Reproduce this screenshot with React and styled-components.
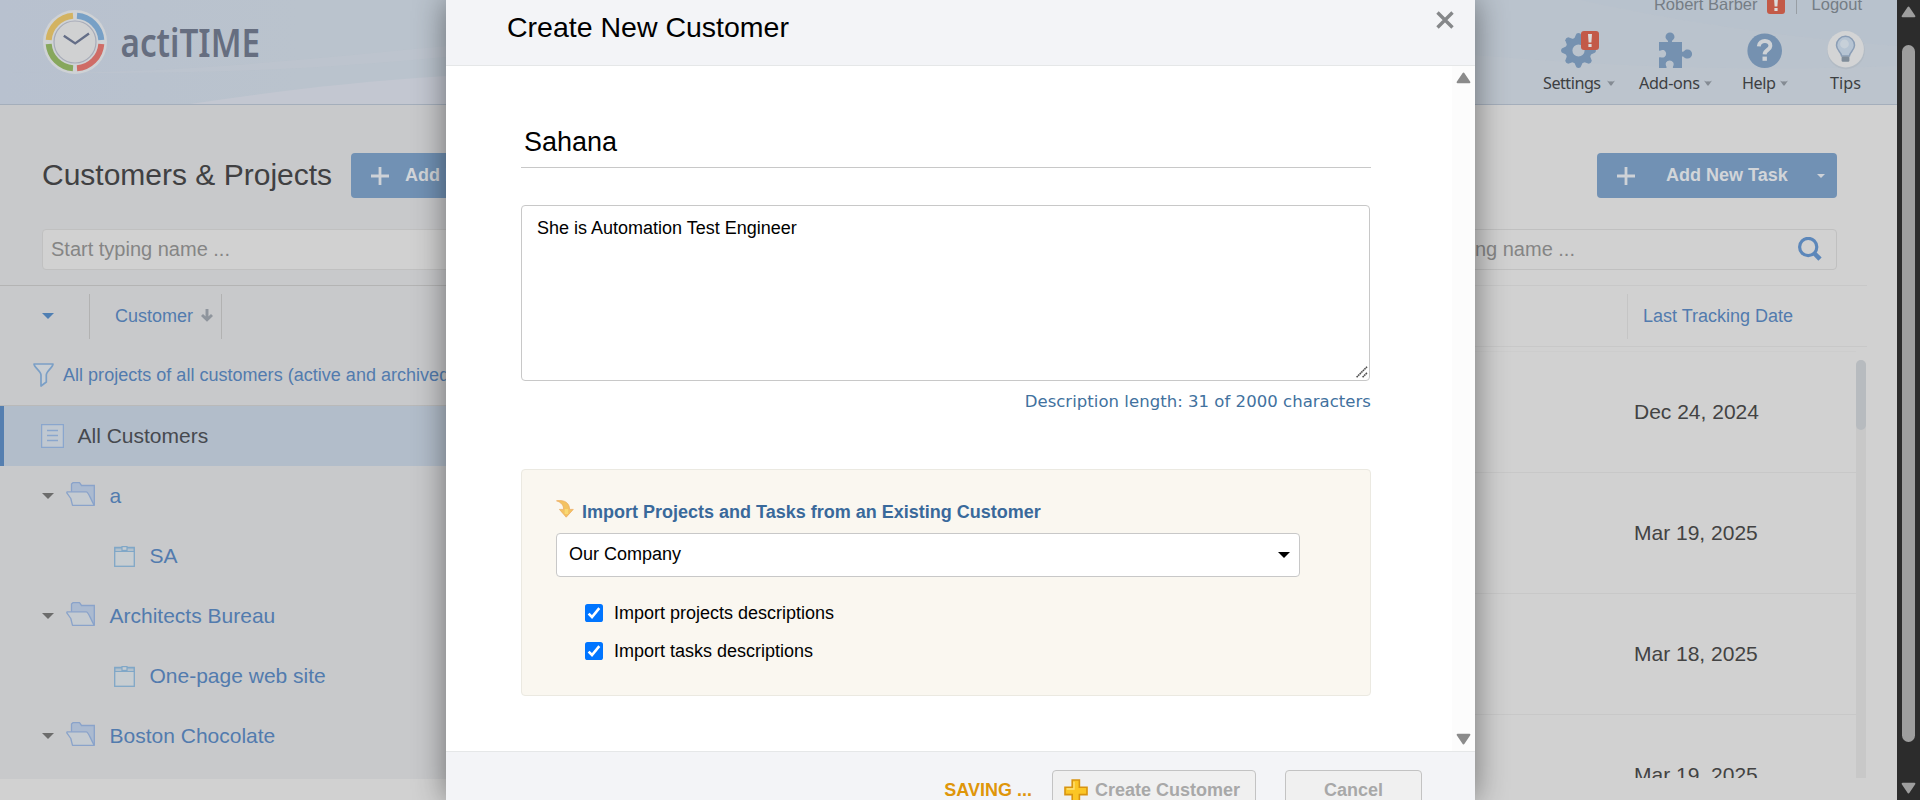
import React from 'react';
import styled, { createGlobalStyle } from 'styled-components';

const GlobalStyle = createGlobalStyle`
  * { box-sizing: border-box; }
  html, body { margin: 0; padding: 0; overflow: hidden; background: #d1d1d1; }
  body { font-family: "Liberation Sans", Arial, sans-serif; color: #000; }
`;

const Screen = styled.div`
  position: relative;
  display: flex;
  width: 1920px;
  height: 800px;
  overflow: hidden;
`;
const Page = styled.div`
  flex: 1;
  display: flex;
  flex-direction: column;
  background: #d1d1d1;
`;

/* ---- top bar ---- */
const TopBar = styled.header`
  position: relative;
  height: 105px;
  flex: none;
  display: flex;
  justify-content: space-between;
  background: linear-gradient(90deg, #b8c1cf 0, #bac3cd 300px, #bac3cd 100%);
  border-bottom: 1px solid #a4aebb;
`;
const Swoosh = styled.svg`
  position: absolute;
  inset: 0;
`;
const Brand = styled.div`
  position: relative;
  display: flex;
  padding: 9px 0 0 42px;
`;
const TopRight = styled.div`
  position: relative;
  width: 380px;
  display: flex;
  flex-direction: column;
`;
const UserLine = styled.div`
  display: flex;
  height: 14px;
  justify-content: flex-end;
  align-items: flex-end;
  padding-right: 35px;
  font-size: 16.5px;
  line-height: 19px;
  color: #757d85;
  white-space: nowrap;
`;
const UserBadge = styled.span`
  display: flex;
  margin: 0 11px 0 9px;
`;
const UserDivider = styled.span`
  width: 1px;
  height: 14px;
  background: #989ea4;
  margin-right: 15px;
`;
const Nav = styled.nav`
  display: flex;
  padding: 17px 0 0 26px;
`;
const NavItem = styled.div`
  width: ${(p) => p.$w}px;
  display: flex;
  flex-direction: column;
`;
const NavIcon = styled.div`
  height: 40px;
  margin-left: ${(p) => p.$pad}px;
`;
const NavLabel = styled.div`
  display: flex;
  align-items: center;
  gap: ${(p) => p.$gap || 5}px;
  font-family: "Noto Sans", sans-serif;
  font-size: 16.2px;
  line-height: 24px;
  letter-spacing: ${(p) => p.$ls || 0}px;
  color: #3d3f42;
`;

/* ---- page body ---- */
const Columns = styled.main`
  flex: 1;
  display: flex;
  min-height: 0;
`;
const LeftPane = styled.section`
  width: 800px;
  height: 674px;
  background: #c8c9cb;
  display: flex;
  flex-direction: column;
`;
const RightPane = styled.section`
  flex: 1;
  display: flex;
  flex-direction: column;
`;
const TitleRow = styled.div`
  display: flex;
  align-items: center;
  justify-content: ${(p) => (p.$end ? 'flex-end' : 'flex-start')};
  height: 45px;
  margin-top: 48px;
  padding: ${(p) => (p.$end ? '0 60px 0 0' : '0 0 0 42px')};
`;
const Title = styled.h1`
  margin: 0;
  padding-bottom: 2px;
  width: 309px;
  font-size: 30px;
  font-weight: 400;
  color: #404042;
  white-space: nowrap;
`;
const BlueButton = styled.div`
  width: 240px;
  height: 45px;
  display: flex;
  align-items: center;
  padding-left: 20px;
  background: #7191b4;
  border-radius: 4px;
  color: #d2d5d9;
  font-size: 18px;
  font-weight: 700;
  white-space: nowrap;
`;
const BlueButtonText = styled.span`
  width: ${(p) => p.$w}px;
  margin-left: ${(p) => p.$ml}px;
`;
const SearchBox = styled.div`
  display: flex;
  align-items: center;
  justify-content: space-between;
  height: 41px;
  margin: 31px ${(p) => p.$mr}px 0 ${(p) => p.$ml}px;
  padding: 0 14px 1px 8px;
  border: 1px solid #c0c0c0;
  border-radius: 4px;
  background: #d1d1d1;
  color: #858585;
  font-size: 20px;
`;
const HeadRow = styled.div`
  display: flex;
  height: ${(p) => p.$h}px;
  margin: 15px ${(p) => p.$mr || 0}px 0 0;
  padding-top: 8px;
  border-top: 1px solid ${(p) => p.$line};
  border-bottom: ${(p) => (p.$bottom ? `1px solid ${p.$line}` : '0')};
`;
const HeadCell = styled.div`
  width: ${(p) => p.$w}px;
  height: 45px;
  display: flex;
  align-items: center;
  padding-left: ${(p) => p.$pad}px;
  padding-bottom: 1px;
  border-right: ${(p) => (p.$line ? `1px solid ${p.$line}` : '0')};
  font-size: 18px;
  color: #527bae;
  white-space: nowrap;
`;
const FilterRow = styled.div`
  display: flex;
  height: 61px;
  padding: 0 0 0 33px;
  align-items: center;
  gap: 9px;
  border-bottom: 1px solid #b9b9b9;
  font-size: 18px;
  letter-spacing: 0.02px;
  color: #527bae;
  white-space: nowrap;
`;
const TreeRow = styled.div`
  display: flex;
  align-items: center;
  height: 60px;
  padding-left: ${(p) => p.$indent}px;
  background: ${(p) => (p.$selected ? '#b2bdca' : 'transparent')};
  border-left: ${(p) => (p.$selected ? '4px solid #557fb0' : '0')};
  color: ${(p) => (p.$selected ? '#46494f' : '#527bae')};
  font-size: 21px;
  white-space: nowrap;
`;
const TreeLabel = styled.span`
  margin-left: ${(p) => p.$gap}px;
`;
const Caret = styled.span`
  width: 0;
  height: 0;
  flex: none;
  border: ${(p) => p.$s || 6}px solid transparent;
  border-top-color: ${(p) => p.$c};
  border-bottom-width: 0;
`;
const TaskArea = styled.div`
  display: flex;
  height: 431px;
  width: 1066px;
  overflow: hidden;
`;
const TaskRows = styled.div`
  flex: 1;
  margin-top: 4px;
  border-top: 1px solid #cdcdcd;
`;
const TaskRow = styled.div`
  height: 121px;
  display: flex;
  align-items: center;
  padding: 0 0 1px 834px;
  border-bottom: 1px solid #c8c8c8;
  font-size: 21px;
  color: #434343;
`;
const TaskTrack = styled.div`
  width: 10px;
  margin-top: 13px;
  background: #c8c8c8;
  border-radius: 5px 5px 0 0;
`;
const TaskThumb = styled.div`
  height: 70px;
  border-radius: 5px;
  background: #b7bbbf;
`;

/* ---- window scrollbar ---- */
const Scrollbar = styled.aside`
  width: 23px;
  background: #2c2c2c;
  display: flex;
  flex-direction: column;
  align-items: center;
  padding-top: 6px;
`;
const ScrollThumb = styled.div`
  width: 13px;
  height: 697px;
  margin: 27px 0 40px;
  border-radius: 7px;
  background: #9e9e9e;
`;

/* ---- dialog ---- */
const Dialog = styled.div`
  position: absolute;
  left: 446px;
  top: 0;
  width: 1029px;
  height: 800px;
  display: flex;
  flex-direction: column;
  background: #fff;
  box-shadow: 0 0 30px rgba(0, 0, 0, 0.46);
`;
const DialogHead = styled.div`
  height: 66px;
  flex: none;
  display: flex;
  justify-content: space-between;
  padding: 11px 21px 0 61px;
  background: #f3f4f7;
  border-bottom: 1px solid #e5e7e8;
`;
const DialogTitle = styled.h2`
  margin: 0;
  font-size: 28.5px;
  line-height: 33px;
  font-weight: 400;
`;
const DialogMain = styled.div`
  display: flex;
  height: 685px;
  flex: none;
`;
const DialogForm = styled.div`
  flex: 1;
  padding: 50px 81px 0 75px;
`;
const DialogTrack = styled.div`
  width: 23px;
  background: #fcfcfc;
  display: flex;
  flex-direction: column;
  align-items: center;
  justify-content: space-between;
  padding: 6px 0;
`;
const NameField = styled.div`
  height: 52px;
  padding: 10px 0 0 3px;
  border-bottom: 1px solid #c8c8c8;
  font-size: 27px;
  line-height: 33px;
`;
const Description = styled.div`
  display: flex;
  justify-content: space-between;
  width: 849px;
  height: 176px;
  margin-top: 37px;
  padding: 12px 1px 1px 15px;
  border: 1px solid #c8c8c8;
  border-radius: 4px;
  font-size: 18px;
  line-height: 21px;
`;
const GripSlot = styled.div`
  align-self: flex-end;
  height: 13px;
  line-height: 0;
`;
const Counter = styled.div`
  margin-top: 9px;
  text-align: right;
  font-family: "DejaVu Sans", Verdana, sans-serif;
  font-size: 16.5px;
  line-height: 24px;
  letter-spacing: 0.035px;
  color: #41719e;
  white-space: nowrap;
`;
const ImportBox = styled.div`
  height: 227px;
  margin-top: 55px;
  padding: 30px 35px 0 34px;
  border: 1px solid #ebe9e1;
  border-radius: 4px;
  background: #faf7f0;
`;
const ImportTitle = styled.div`
  display: flex;
  gap: 8px;
  height: 33px;
  color: #39699b;
  font-size: 18px;
  font-weight: 700;
  line-height: 24px;
  white-space: nowrap;
`;
const Select = styled.div`
  display: flex;
  align-items: center;
  justify-content: space-between;
  width: 744px;
  height: 44px;
  padding: 0 9px 1px 12px;
  border: 1px solid #c8c8c8;
  border-radius: 4px;
  background: #fff;
  font-size: 18px;
  margin-bottom: 17px;
`;
const CheckRow = styled.div`
  display: flex;
  align-items: center;
  gap: 11px;
  height: 38px;
  padding-left: 29px;
  font-size: 18px;
`;
const DialogFoot = styled.div`
  flex: 1;
  display: flex;
  padding: 18px 53px 0 0;
  justify-content: flex-end;
  background: #f3f4f7;
  border-top: 1px solid #e5e7e8;
  overflow: hidden;
`;
const Saving = styled.span`
  margin: 10px 20px 0 0;
  color: #df960a;
  font-size: 18px;
  font-weight: 700;
  line-height: 21px;
`;
const FootButton = styled.div`
  display: flex;
  justify-content: ${(p) => (p.$center ? 'center' : 'flex-start')};
  gap: 7px;
  width: ${(p) => p.$w}px;
  height: 42px;
  margin-left: ${(p) => p.$ml || 0}px;
  padding: 8px 11px 0;
  border: 1px solid #c3c3c3;
  border-radius: 4px;
  background: #f0f0f0;
  color: #a8a8a8;
  font-size: 18px;
  font-weight: 700;
  line-height: 23px;
  white-space: nowrap;
`;

/* ---- drawings ---- */
const Logo = () => (
  <svg width="235" height="80" viewBox="0 0 235 80">
    <circle cx="33" cy="33" r="32" fill="#cfd2d5" />
    <g fill="none" strokeWidth="6">
      <path d="M31 6.7 A26.3 26.3 0 0 0 6.7 31" stroke="#d3b361" />
      <path d="M35 6.7 A26.3 26.3 0 0 1 59.3 31" stroke="#77a0c6" />
      <path d="M59.3 35 A26.3 26.3 0 0 1 35 59.3" stroke="#cf6c66" />
      <path d="M6.7 35 A26.3 26.3 0 0 0 31 59.3" stroke="#87a75c" />
    </g>
    <circle cx="33" cy="33" r="21" fill="#d0d1d2" stroke="#a7abb8" strokeWidth="1.2" />
    <path d="M21.8 26.7 L33.2 34.4 L47 24.5" fill="none" stroke="#646e87" strokeWidth="2.4" />
    <text x="78.5" y="48" fontFamily="Noto Sans, sans-serif" fontWeight="600" fontSize="39" fill="#666e80" textLength="139.5" lengthAdjust="spacingAndGlyphs">actiTIME</text>
  </svg>
);
const Alert = () => (
  <svg width="18" height="19" viewBox="0 0 18 19">
    <rect width="18" height="19" rx="3" fill="#c35a48" />
    <path d="M7 3 H11 L10.4 11.5 H7.6 Z M7.4 13 H10.6 V16 H7.4 Z" fill="#dcdcdc" />
  </svg>
);
const Gear = () => (
  <svg width="40" height="38" viewBox="0 0 40 38">
    {[0, 45, 90, 135, 180, 225, 270, 315].map((a) => (
      <path key={a} d="M12.6 9 L15.4 2.8 Q17.5 1.4 19.6 2.8 L22.4 9 Z" fill="#7591b0" transform={`rotate(${a} 17.5 19.5)`} />
    ))}
    <circle cx="17.5" cy="19.5" r="9.6" fill="none" stroke="#7591b0" strokeWidth="7" />
    <rect x="20" y="0" width="18" height="19" rx="3" fill="#c35a48" />
    <path d="M27 3 H31 L30.4 11.5 H27.6 Z M27.4 13 H30.6 V16 H27.4 Z" fill="#dcdcdc" />
  </svg>
);
const Puzzle = () => (
  <svg width="34" height="38" viewBox="0 0 34 38">
    <path d="M0 11 H9 C9.5 9 6.5 8.5 6.5 6 A4.5 4.5 0 0 1 15.5 6 C15.5 8.5 12.5 9 13 11 H23 V20.5 C25 21.5 25 18.4 28.5 18.4 A4.6 4.6 0 0 1 28.5 27.6 C25 27.6 25 25 23 25.5 V37 H14 C13.5 35 15.5 34.5 14.3 31.5 A4.3 4.3 0 0 0 7 31.5 C6 34.5 8 35 7.5 37 H0 V26.5 C2 25.5 3 27.5 5.5 26 A4 4 0 0 0 5.5 19.5 C3 18 2 20.5 0 19.5 Z" fill="#7591b0" />
  </svg>
);
const HelpIcon = () => (
  <svg width="36" height="38" viewBox="0 0 36 38">
    <circle cx="17.7" cy="19.7" r="17.3" fill="#7591b0" />
    <path d="M11.8 15.4 C12.2 8.2 23.6 8.2 23.4 14.9 C23.3 19 17.8 18.9 17.6 23.4" fill="none" stroke="#ced2d6" strokeWidth="3.9" />
    <rect x="15.5" y="25.6" width="4.4" height="4.2" fill="#ced2d6" />
  </svg>
);
const Bulb = () => (
  <svg width="42" height="40" viewBox="0 0 42 40">
    <circle cx="19" cy="19.5" r="18.8" fill="#adb5be" opacity=".6" />
    <circle cx="18.7" cy="18.2" r="18.2" fill="#d3d4d5" />
    <path d="M14.6 25 C14.4 21 9.5 19.5 9.5 14.3 A9 9 0 0 1 27.5 14.3 C27.5 19.5 22.6 21 22.4 25 Z" fill="#b6c4d3" stroke="#8a9db5" strokeWidth="1.5" />
    <circle cx="17.5" cy="13" r="4.4" fill="#c7d0d9" />
    <rect x="14.6" y="25.5" width="7.8" height="5.2" rx="1.2" fill="#7f8c99" />
  </svg>
);
const NavCaret = () => (
  <svg width="8" height="6" viewBox="0 0 8 6">
    <path d="M0 0.5 Q2 2 4 1.2 Q6 2 8 0.5 L4.6 5.5 H3.4 Z" fill="#848b93" />
  </svg>
);
const Plus = () => (
  <svg width="18" height="18" viewBox="0 0 18 18">
    <path d="M9 0 V18 M0 9 H18" stroke="#ced2d7" strokeWidth="2.8" />
  </svg>
);
const Magnifier = () => (
  <svg width="24" height="24" viewBox="0 0 24 24">
    <circle cx="10.2" cy="10" r="8.6" fill="none" stroke="#5c87ba" strokeWidth="3.2" />
    <path d="M16 16 L22 22.2" stroke="#5c87ba" strokeWidth="4.6" />
  </svg>
);
const SortArrow = () => (
  <svg width="12" height="13" viewBox="0 0 12 13">
    <path d="M6 0 V10.5 M1 6 L6 10.8 L11 6" fill="none" stroke="#8f959d" strokeWidth="2.9" />
  </svg>
);
const Funnel = () => (
  <svg width="21" height="24" viewBox="0 0 21 24">
    <path d="M1 1 H20 C20 4.5 13.3 8 13.3 12 V19 L8 23 V12 C8 8 1 4.5 1 1 Z" fill="#c9ced3" stroke="#7b9fc6" strokeWidth="1.7" strokeLinejoin="round" />
  </svg>
);
const ListIcon = () => (
  <svg width="23" height="24" viewBox="0 0 23 24">
    <rect x=".6" y=".6" width="21.8" height="22.8" fill="#c0c8d1" stroke="#8aa6cd" strokeWidth="1.3" />
    <path d="M6 6.5 H17 M6 11.5 H17 M6 16.5 H17" stroke="#8aa6cd" strokeWidth="1.3" />
  </svg>
);
const Folder = () => (
  <svg width="30" height="24" viewBox="0 0 30 24">
    <path d="M5.5 10 V2 L7 .7 H13.5 L15.5 3.5 H28.3 V23.3" fill="#abbad0" stroke="#8aa3ca" strokeWidth="1.3" />
    <path d="M1 9.8 H20.5 C22.5 10 24.5 17 28.3 23.3 H6.5 L4.8 16.5 L.8 10.8 Z" fill="#c5cbd1" stroke="#8aa3ca" strokeWidth="1.3" strokeLinejoin="round" />
  </svg>
);
const ProjectIcon = () => (
  <svg width="21" height="21" viewBox="0 0 21 21">
    <rect x=".7" y="1.4" width="19.6" height="18.9" fill="#c7cdd1" stroke="#80a7c7" strokeWidth="1.3" />
    <path d="M1 2 H20 V5.5 H1 Z" fill="#b3c1cd" stroke="#80a7c7" strokeWidth="1" />
    <rect x="8" y=".6" width="5" height="3.8" fill="#c7cdd1" stroke="#80a7c7" strokeWidth="1.2" />
  </svg>
);
const ScrollArrow = ({ down, color }) => (
  <svg width="15" height="12" viewBox="0 0 15 12">
    <path d="M7.5 1.6 L13.4 10.2 H1.6 Z" fill={color} stroke={color} strokeWidth="2" strokeLinejoin="round" transform={down ? 'rotate(180 7.5 6)' : undefined} />
  </svg>
);
const Close = () => (
  <svg width="18" height="18" viewBox="0 0 18 18">
    <path d="M1.5 1.5 L16.5 16.5 M16.5 1.5 L1.5 16.5" stroke="#85878a" strokeWidth="3.4" />
  </svg>
);
const Grip = () => (
  <svg width="12" height="12" viewBox="0 0 12 12">
    <path d="M.6 11.2 L11 .8 M6.6 11.2 L11 6.8" stroke="#505050" strokeWidth="1.6" strokeDasharray="1.7 .5" />
  </svg>
);
const ImportArrow = () => (
  <svg width="18" height="18" viewBox="0 0 18 18">
    <path d="M.5 .8 C9 -.6 13.6 3.4 13.6 9.4 H17.3 L10.2 17.2 L3.4 9.4 H7.6 C7.6 5.5 5.5 2.4 .5 .8 Z" fill="#f3c263" stroke="#eda95a" strokeWidth=".7" />
    <path d="M10.4 9 V14" stroke="#f9d973" strokeWidth="3.4" />
  </svg>
);
const Check = () => (
  <svg width="18" height="18" viewBox="0 0 18 18">
    <rect width="18" height="18" rx="2.6" fill="#0075ff" />
    <path d="M3.6 9.6 L7 13 L14.3 4.2" fill="none" stroke="#fff" strokeWidth="2.6" />
  </svg>
);
const GoldPlus = () => (
  <svg width="24" height="24" viewBox="0 0 24 24">
    <path d="M8.2 1 H15.4 V8.2 H23 V15.6 H15.4 V23 H8.2 V15.6 H1 V8.2 H8.2 Z" fill="#fbc625" stroke="#d89410" strokeWidth="1.6" />
    <path d="M10 2.8 V10 H2.8" fill="none" stroke="#fde27c" strokeWidth="1.3" />
  </svg>
);

const tree = [
  { name: 'a', folder: true },
  { name: 'SA' },
  { name: 'Architects Bureau', folder: true },
  { name: 'One-page web site' },
  { name: 'Boston Chocolate', folder: true },
];
const dates = ['Dec 24, 2024', 'Mar 19, 2025', 'Mar 18, 2025', 'Mar 19, 2025'];

export default function App() {
  return (
    <Screen>
      <GlobalStyle />
      <Page>
        <TopBar>
          <Swoosh width="1897" height="104" viewBox="0 0 1897 104" preserveAspectRatio="none">
            <path d="M0 72 C150 76 300 60 446 46 V57 C330 68 200 76 0 72 Z" fill="#c0c5d0" opacity=".5" />
            <path d="M190 104 C270 92 350 82 446 76 V104 Z" fill="#c3c7d1" />
            <path d="M1475 55 C1600 66 1750 72 1897 66 V104 H1475 Z" fill="#bfc6ce" opacity=".35" />
            <path d="M1580 0 C1680 22 1790 38 1897 46 V0 Z" fill="#b6c1ce" opacity=".4" />
          </Swoosh>
          <Brand><Logo /></Brand>
          <TopRight>
            <UserLine>
              <span>Robert Barber</span>
              <UserBadge><Alert /></UserBadge>
              <UserDivider />
              <span>Logout</span>
            </UserLine>
            <Nav>
              <NavItem $w={96}>
                <NavIcon $pad={18}><Gear /></NavIcon>
                <NavLabel $ls={-0.5} $gap={6}>Settings<NavCaret /></NavLabel>
              </NavItem>
              <NavItem $w={103}>
                <NavIcon $pad={20}><Puzzle /></NavIcon>
                <NavLabel $ls={-0.35} $gap={4}>Add-ons<NavCaret /></NavLabel>
              </NavItem>
              <NavItem $w={88}>
                <NavIcon $pad={5}><HelpIcon /></NavIcon>
                <NavLabel $ls={-0.4} $gap={4.5}>Help<NavCaret /></NavLabel>
              </NavItem>
              <NavItem $w={60}>
                <NavIcon $pad={-3.5}><Bulb /></NavIcon>
                <NavLabel>Tips</NavLabel>
              </NavItem>
            </Nav>
          </TopRight>
        </TopBar>
        <Columns>
          <LeftPane>
            <TitleRow>
              <Title>Customers &amp; Projects</Title>
              <BlueButton><Plus /><BlueButtonText $w={121} $ml={16}>Add New</BlueButtonText></BlueButton>
            </TitleRow>
            <SearchBox $ml={42} $mr={42}>Start typing name ...</SearchBox>
            <HeadRow $h={60} $line="#b4b4b4">
              <HeadCell $w={90} $pad={42} $line="#b2b2b2"><Caret $c="#4f7fb3" /></HeadCell>
              <HeadCell $w={132} $pad={25} $line="#b2b2b2">
                <TreeLabel $gap={0}>Customer&nbsp;</TreeLabel><TreeLabel $gap={3}><SortArrow /></TreeLabel>
              </HeadCell>
            </HeadRow>
            <FilterRow><Funnel />All projects of all customers (active and archived)</FilterRow>
            <TreeRow $selected $indent={37}><ListIcon /><TreeLabel $gap={13.5}>All Customers</TreeLabel></TreeRow>
            {tree.map((n) => (
              <TreeRow key={n.name} $indent={n.folder ? 42 : 114}>
                {n.folder ? <><Caret $c="#6c6c6c" /><TreeLabel $gap={12}><Folder /></TreeLabel></> : <ProjectIcon />}
                <TreeLabel $gap={n.folder ? 13.5 : 14.5}>{n.name}</TreeLabel>
              </TreeRow>
            ))}
          </LeftPane>
          <RightPane>
            <TitleRow $end>
              <BlueButton>
                <Plus /><BlueButtonText $w={151} $ml={31}>Add New Task</BlueButtonText><Caret $c="#ced2d7" $s={4.5} />
              </BlueButton>
            </TitleRow>
            <SearchBox $ml={587} $mr={60}>Start typing name ...<Magnifier /></SearchBox>
            <HeadRow $h={62} $mr={30} $line="#c8c8c8" $bottom>
              <HeadCell $w={828} $line="#c5c5c5" />
              <HeadCell $w={230} $pad={15}>Last Tracking Date</HeadCell>
            </HeadRow>
            <TaskArea>
              <TaskRows>
                {dates.map((d, i) => <TaskRow key={i}>{d}</TaskRow>)}
              </TaskRows>
              <TaskTrack><TaskThumb /></TaskTrack>
            </TaskArea>
          </RightPane>
        </Columns>
      </Page>
      <Scrollbar>
        <ScrollArrow color="#9e9e9e" />
        <ScrollThumb />
        <ScrollArrow down color="#9e9e9e" />
      </Scrollbar>
      <Dialog>
        <DialogHead>
          <DialogTitle>Create New Customer</DialogTitle>
          <Close />
        </DialogHead>
        <DialogMain>
          <DialogForm>
            <NameField>Sahana</NameField>
            <Description>
              <span>She is Automation Test Engineer</span>
              <GripSlot><Grip /></GripSlot>
            </Description>
            <Counter>Description length: 31 of 2000 characters</Counter>
            <ImportBox>
              <ImportTitle><ImportArrow />Import Projects and Tasks from an Existing Customer</ImportTitle>
              <Select>Our Company<Caret $c="#000" $s={6} /></Select>
              <CheckRow><Check />Import projects descriptions</CheckRow>
              <CheckRow><Check />Import tasks descriptions</CheckRow>
            </ImportBox>
          </DialogForm>
          <DialogTrack>
            <ScrollArrow color="#8b8b8b" />
            <ScrollArrow down color="#8b8b8b" />
          </DialogTrack>
        </DialogMain>
        <DialogFoot>
          <Saving>SAVING ...</Saving>
          <FootButton $w={204}><GoldPlus />Create Customer</FootButton>
          <FootButton $w={137} $ml={29} $center>Cancel</FootButton>
        </DialogFoot>
      </Dialog>
    </Screen>
  );
}
